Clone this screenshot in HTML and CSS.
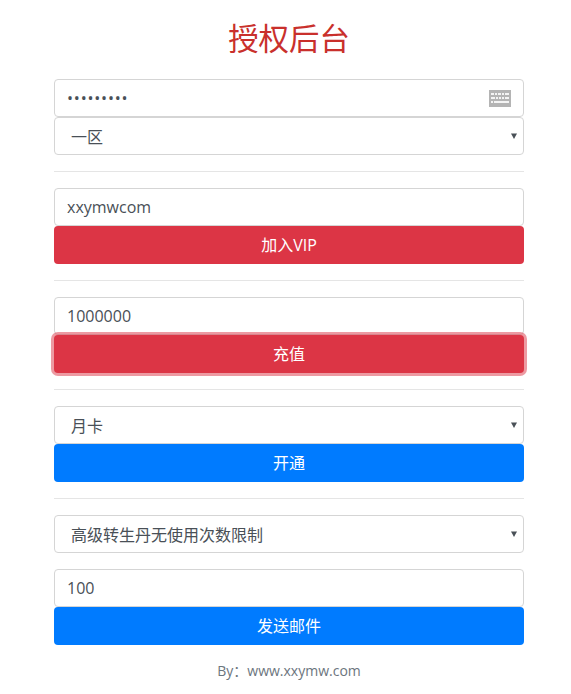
FILE: index.html
```html
<!DOCTYPE html>
<html lang="zh-CN">
<head>
<meta charset="utf-8">
<title>授权后台</title>
<link rel="stylesheet" href="styles.css">
</head>
<body>
<main class="page">
  <h1 class="title">授权后台</h1>
  <div class="password-wrap">
    <input class="control secret" type="password" value="123456789">
    <svg class="kbd" viewBox="0 0 22 17" width="22" height="17" aria-hidden="true">
      <rect width="22" height="17" fill="#b4b4b4"/>
      <g fill="#f4f4f4">
        <rect x="2" y="3" width="3" height="2"/><rect x="6" y="3" width="2" height="2"/><rect x="9" y="3" width="3" height="2"/><rect x="13" y="3" width="2" height="2"/><rect x="16" y="3" width="4" height="2"/>
        <rect x="2" y="7" width="4" height="2"/><rect x="7" y="7" width="2" height="2"/><rect x="10" y="7" width="2" height="2"/><rect x="13" y="7" width="2" height="2"/><rect x="16" y="7" width="4" height="2"/>
        <rect x="2" y="11" width="2" height="2"/><rect x="5" y="11" width="15" height="2"/>
      </g>
    </svg>
  </div>
  <select class="control select"><option>一区</option></select>
  <hr class="rule">
  <input class="control" type="text" value="xxymwcom">
  <button class="btn danger" type="button">加入VIP</button>
  <hr class="rule">
  <input class="control" type="text" value="1000000">
  <button class="btn danger focused" type="button">充值</button>
  <hr class="rule">
  <select class="control select"><option>月卡</option></select>
  <button class="btn primary" type="button">开通</button>
  <hr class="rule">
  <select class="control select"><option>高级转生丹无使用次数限制</option></select>
  <input class="control spaced" type="text" value="100">
  <button class="btn primary" type="button">发送邮件</button>
  <p class="footer">By：www.xxymw.com</p>
</main>
</body>
</html>
```
FILE: styles.css
```css
* { box-sizing: border-box; }
html, body { margin: 0; padding: 0; background: #fff; }
body {
  font-family: "Open Sans", "Noto Sans CJK SC", sans-serif;
  font-size: 16px;
  color: #495057;
}
.page {
  display: flex;
  flex-direction: column;
  padding: 0 47px 0 54px;
  height: 694px;
  overflow: hidden;
}
.title {
  margin: 16px 0 20px;
  height: 43px;
  font-family: "Noto Sans CJK SC", sans-serif;
  font-size: 30.4px;
  font-weight: 400;
  line-height: 43px;
  text-align: center;
  color: #c9302c;
}
.password-wrap { position: relative; height: 38px; }
.kbd { position: absolute; top: 11px; right: 13px; }
.control {
  display: block;
  width: 100%;
  height: 38px;
  padding: 6px 12px;
  font: inherit;
  color: #495057;
  background: #fff;
  border: 1px solid #d5d5d5;
  border-radius: 4px;
  outline: none;
}
.secret { letter-spacing: .8px; }
.select {
  appearance: none;
  padding: 8px 24px 6px 16px;
  background: #fff url("data:image/svg+xml,%3Csvg xmlns='http://www.w3.org/2000/svg' width='6' height='6'%3E%3Cpath d='M0 0.5h6L3 6z' fill='%23495057'/%3E%3C/svg%3E") no-repeat right 6px top 15px;
}
.spaced { margin-top: 16px; }
.rule {
  width: 100%;
  margin: 16px 0;
  height: 1px;
  border: 0;
  background: #e5e5e5;
}
.btn {
  display: block;
  flex: none;
  width: 100%;
  height: 38px;
  padding: 0 0 2px;
  font: inherit;
  color: #fff;
  border: 0;
  border-radius: 4px;
}
.danger { background: #dc3545; }
.primary { background: #007bff; }
.focused { box-shadow: 0 0 0 3px rgba(220, 53, 69, .5); position: relative; }
.footer {
  margin: 16px 0 0;
  line-height: 20px;
  font-size: 14px;
  text-align: center;
  color: #6c757d;
}
```
